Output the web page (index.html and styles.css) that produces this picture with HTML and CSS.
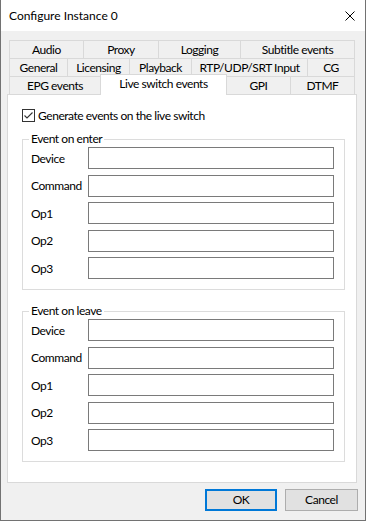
FILE: index.html
```html
<!DOCTYPE html>
<html lang="en">
<head>
<meta charset="utf-8">
<title>Configure Instance 0</title>
<link rel="stylesheet" href="styles.css">
</head>
<body>
<div class="window">
  <div class="titlebar">
    <span class="title">Configure Instance 0</span>
    <svg class="close" width="10" height="10" viewBox="0 0 10 10" aria-label="Close"><path d="M0.5 0.5L9.5 9.5M9.5 0.5L0.5 9.5" stroke="#000" stroke-width="1" fill="none"/></svg>
  </div>
  <div class="client">
    <div class="tabs">
      <div class="tabrow">
        <div class="tab t-audio">Audio</div>
        <div class="tab t-proxy">Proxy</div>
        <div class="tab t-logging">Logging</div>
        <div class="tab t-subtitle last">Subtitle events</div>
      </div>
      <div class="tabrow">
        <div class="tab t-general">General</div>
        <div class="tab t-licensing">Licensing</div>
        <div class="tab t-playback">Playback</div>
        <div class="tab t-rtp">RTP/UDP/SRT Input</div>
        <div class="tab t-cg last">CG</div>
      </div>
      <div class="tabrow">
        <div class="tab t-epg">EPG events</div>
        <div class="tab t-live selected">Live switch events</div>
        <div class="tab t-gpi">GPI</div>
        <div class="tab t-dtmf last">DTMF</div>
      </div>
    </div>
    <div class="panel">
      <label class="check">
        <svg class="checkbox" width="13" height="13" viewBox="0 0 13 13"><rect x="0.5" y="0.5" width="12" height="12" fill="#fff" stroke="#333"/><path d="M2.5 6.5L5 9L10.5 3.5" stroke="#333" stroke-width="1.1" fill="none"/></svg>
        <span>Generate events on the live switch</span>
      </label>
      <fieldset class="group">
        <legend>Event on enter</legend>
        <div class="fields">
          <span class="lbl">Device</span><span class="edit"></span>
          <span class="lbl">Command</span><span class="edit"></span>
          <span class="lbl">Op1</span><span class="edit"></span>
          <span class="lbl">Op2</span><span class="edit"></span>
          <span class="lbl">Op3</span><span class="edit"></span>
        </div>
      </fieldset>
      <fieldset class="group second">
        <legend>Event on leave</legend>
        <div class="fields">
          <span class="lbl">Device</span><span class="edit"></span>
          <span class="lbl">Command</span><span class="edit"></span>
          <span class="lbl">Op1</span><span class="edit"></span>
          <span class="lbl">Op2</span><span class="edit"></span>
          <span class="lbl">Op3</span><span class="edit"></span>
        </div>
      </fieldset>
    </div>
    <div class="buttons">
      <button class="btn default">OK</button>
      <button class="btn cancel">Cancel</button>
    </div>
  </div>
</div>
</body>
</html>
```
FILE: styles.css
```css
html, body {
  margin: 0;
  padding: 0;
  background: #ffffff;
}
body {
  font-family: Lato, "Noto Sans", "Liberation Sans", sans-serif;
  font-size: 12px;
  letter-spacing: -0.45px;
  color: #000;
}
.window {
  width: 366px;
  height: 521px;
  box-sizing: border-box;
  border: 1px solid #727272;
  border-top: none;
  display: flex;
  flex-direction: column;
  background: #f0f0f0;
}
.titlebar {
  height: 31px;
  flex: none;
  background: #fff;
  display: flex;
  align-items: center;
  justify-content: space-between;
  padding: 0 10px 0 8px;
}
.title {
  font-size: 12px;
  letter-spacing: 0;
  line-height: 16px;
  margin-top: 1px;
}
.close {
  display: block;
  margin-top: 1px;
}
.client {
  flex: 1;
  display: flex;
  flex-direction: column;
  padding: 9px 0 0 6px;
}
.tabs {
  margin-left: 2px;
  display: flex;
  flex-direction: column;
}
.tabrow {
  display: flex;
  height: 18px;
  align-items: flex-end;
}
.tab {
  box-sizing: border-box;
  height: 18px;
  border-top: 1px solid #d9d9d9;
  border-left: 1px solid #d9d9d9;
  background: #f0f0f0;
  display: flex;
  align-items: center;
  justify-content: center;
  line-height: 16px;
  white-space: nowrap;
}
.tab.last {
  border-right: 1px solid #d9d9d9;
}
.tab.selected {
  position: relative;
  z-index: 1;
  height: 21px;
  margin-bottom: -1px;
  margin-right: -1px;
  border-right: 1px solid #d9d9d9;
  background: #fff;
  padding-bottom: 3px;
}
.t-audio { width: 74px; }
.t-proxy { width: 75px; }
.t-logging { width: 82px; }
.t-subtitle { width: 115px; }
.t-general { width: 58px; }
.t-licensing { width: 62px; }
.t-playback { width: 62px; }
.t-rtp { width: 116px; }
.t-cg { width: 48px; }
.t-epg { width: 91px; }
.t-live { width: 127px; }
.t-gpi { width: 64px; }
.t-dtmf { width: 65px; }

.panel {
  box-sizing: border-box;
  width: 350px;
  height: 389px;
  border: 1px solid #d9d9d9;
  background: #fff;
  padding: 12px 0 0 14px;
}
.check {
  display: flex;
  align-items: center;
  height: 16px;
  gap: 3px;
}
.checkbox {
  display: block;
}
.group {
  box-sizing: border-box;
  width: 323px;
  margin: 8px 0 0 0;
  padding: 0 10px 10px 8px;
  border: 1px solid #dcdcdc;
  min-inline-size: 0;
}
.group.second {
  margin-top: 13px;
}
.group legend {
  padding: 0 2px;
  margin-left: -2px;
  line-height: 16px;
}
.fields {
  display: grid;
  grid-template-columns: 57px 246px;
  grid-auto-rows: 22px;
  row-gap: 5.5px;
  align-items: center;
}
.edit {
  box-sizing: border-box;
  height: 22px;
  border: 1px solid #7a7a7a;
  background: #fff;
}
.buttons {
  display: flex;
  justify-content: flex-end;
  gap: 8px;
  margin: 6px 7px 0 0;
}
.btn {
  box-sizing: border-box;
  height: 22px;
  font: inherit;
  letter-spacing: inherit;
  color: #000;
  background: #e1e1e1;
  border: 1px solid #adadad;
  padding: 0;
  line-height: 18px;
}
.btn.default {
  width: 72px;
  border: 2px solid #0078d7;
}
.btn.cancel {
  width: 73px;
}
```
